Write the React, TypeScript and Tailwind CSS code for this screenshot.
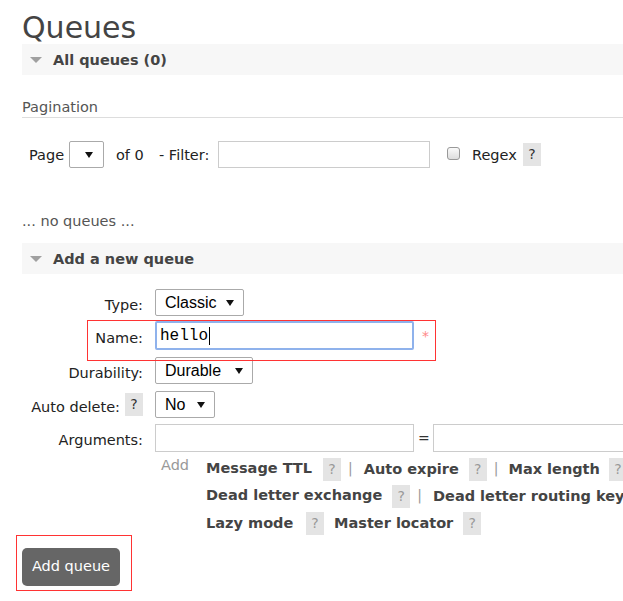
import clsx from "clsx";

const font = { fontFamily: '"DejaVu Sans", Verdana, sans-serif' };

function Help({ light }: { light?: boolean }) {
  return (
    <span
      className={clsx(
        "inline-flex h-[23px] w-[18px] shrink-0 items-center justify-center bg-[#e4e4e4] text-[14px]",
        light ? "text-[#999]" : "text-[#333]"
      )}
    >
      ?
    </span>
  );
}

function Caret() {
  return (
    <svg width="8" height="6" viewBox="0 0 8 6" className="shrink-0">
      <path d="M0 0h8L4 6z" fill="#111" />
    </svg>
  );
}

function Select({ value, className }: { value: string; className: string }) {
  return (
    <div
      className={clsx(
        "flex h-[27px] items-center rounded-[2px] border border-[#aaa] bg-white pl-[9px] pr-[9px] text-[16px] text-black",
        className
      )}
      style={{ fontFamily: '"Liberation Sans", Arial, sans-serif' }}
    >
      <span className="flex-1">{value}</span>
      <Caret />
    </div>
  );
}

function SectionHeader({ title }: { title: string }) {
  return (
    <div className="flex h-[31px] items-center bg-[#f7f7f7]">
      <span className="ml-[8px] h-0 w-0 border-x-[6px] border-t-[6px] border-x-transparent border-t-[#a0a0a0]" />
      <h2 className="ml-[11px] pt-[2px] text-[14.5px] font-bold text-[#444]">{title}</h2>
    </div>
  );
}

function FormRow({ label, children, className }: { label: React.ReactNode; children: React.ReactNode; className?: string }) {
  return (
    <div className={clsx("flex items-center", className)}>
      <div className="flex w-[121px] items-center justify-end gap-[5px] pt-[6px] text-[14.5px] text-[#222]">{label}</div>
      <div className="ml-[12px] flex items-center">{children}</div>
    </div>
  );
}

function ArgLink({ text }: { text: string }) {
  return <span className="text-[14.5px] font-bold text-[#444]">{text}</span>;
}

function Sep() {
  return <span className="ml-[7px] text-[14px] text-[#999]">|</span>;
}

export default function App() {
  return (
    <div className="relative h-[601px] w-[623px] overflow-hidden bg-white" style={font}>
      <div className="w-[780px] pl-[22px]">
        <h1 className="mt-[8px] h-[36px] text-[30px] leading-[40px] text-[#444]">Queues</h1>
        <SectionHeader title="All queues (0)" />

        <div className="mt-[20px] h-[23px] border-b border-[#ddd] text-[14.5px] leading-[24px] text-[#555]">
          Pagination
        </div>

        <div className="mt-[23px] flex h-[27px] items-center pl-[7px] text-[14.5px] text-[#222]">
          <span className="w-[40px] pt-[2px]">Page</span>
          <div className="flex h-[27px] w-[35px] items-center justify-center rounded-[2px] border border-[#aaa] pl-[4px]">
            <Caret />
          </div>
          <span className="ml-[12px] w-[43px] pt-[2px]">of 0</span>
          <span className="w-[59px] pt-[2px]">- Filter:</span>
          <div className="h-[27px] w-[212px] border border-[#ccc]" />
          <span className="ml-[17px] mb-[2px] h-[13px] w-[13px] rounded-[3px] border border-[#999] bg-gradient-to-b from-[#fafafa] to-[#ddd]" />
          <span className="ml-[12px] w-[51px] pt-[2px]">Regex</span>
          <Help />
        </div>

        <div className="mt-[42px] h-[20px] text-[14.5px] leading-[22px] text-[#555]">... no queues ...</div>

        <div className="mt-[13px]">
          <SectionHeader title="Add a new queue" />
        </div>

        <div className="mt-[15px] flex flex-col">
          <FormRow label="Type:" className="h-[27px]">
            <Select value="Classic" className="w-[89px]" />
          </FormRow>
          <FormRow label="Name:" className="mt-[5px] h-[29px]">
            <div
              className="flex h-[29px] w-[259px] items-center rounded-[2px] border-2 border-[#8fb2ec] pl-[3px] text-[16px] text-black"
              style={{ fontFamily: '"Liberation Mono", "Courier New", monospace' }}
            >
              hello
              <span className="ml-[1px] h-[18px] w-[1px] bg-black" />
            </div>
            <span className="ml-[8px] self-start pt-[5px] text-[14px] text-[#f88]">*</span>
          </FormRow>
          <FormRow label="Durability:" className="mt-[7px] h-[27px]">
            <Select value="Durable" className="w-[98px]" />
          </FormRow>
          <FormRow
            label={
              <>
                <span>Auto delete:</span>
                <span className="-mt-[6px]">
                  <Help />
                </span>
              </>
            }
            className="mt-[7px] h-[27px]"
          >
            <Select value="No" className="w-[60px]" />
          </FormRow>
          <FormRow label="Arguments:" className="mt-[6px] h-[28px]">
            <div className="h-[28px] w-[259px] border border-[#ccc]" />
            <span className="ml-[4px] w-[10px] text-[14px] text-[#333]">=</span>
            <div className="ml-[5px] h-[28px] w-[259px] border border-[#ccc]" />
          </FormRow>

          <div className="mt-[3px] flex pl-[139px]">
            <span className="text-[14.5px] leading-[20px] text-[#999]">Add</span>
            <div className="ml-[16px] flex flex-col pl-[1px]">
              <div className="flex h-[27px] items-center">
                <ArgLink text="Message TTL" />
                <span className="ml-[11px]"><Help light /></span>
                <Sep />
                <span className="ml-[11px]"><ArgLink text="Auto expire" /></span>
                <span className="ml-[10px]"><Help light /></span>
                <Sep />
                <span className="ml-[10px]"><ArgLink text="Max length" /></span>
                <span className="ml-[9px]"><Help light /></span>
              </div>
              <div className="flex h-[27px] items-center">
                <ArgLink text="Dead letter exchange" />
                <span className="ml-[10px]"><Help light /></span>
                <Sep />
                <span className="ml-[11px]"><ArgLink text="Dead letter routing key" /></span>
              </div>
              <div className="flex h-[27px] items-center">
                <span className="w-[90px]"><ArgLink text="Lazy mode" /></span>
                <span className="ml-[10px]"><Help light /></span>
                <span className="ml-[10px]"><ArgLink text="Master locator" /></span>
                <span className="ml-[10px]"><Help light /></span>
              </div>
            </div>
          </div>

          <button
            type="button"
            className="mt-[12px] h-[38px] w-[98px] rounded-[5px] bg-[#666] text-[14.5px] text-white"
          >
            Add queue
          </button>
        </div>
      </div>

      <div className="pointer-events-none absolute left-[87px] top-[320px] h-[41px] w-[349px] border border-[#f33]" />
      <div className="pointer-events-none absolute left-[16px] top-[535px] h-[56px] w-[116px] border border-[#f33]" />
    </div>
  );
}
